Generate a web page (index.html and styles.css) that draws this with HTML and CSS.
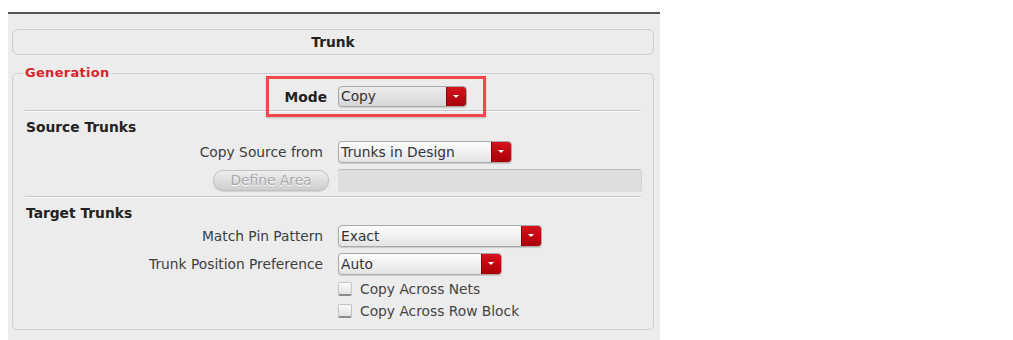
FILE: index.html
```html
<!DOCTYPE html>
<html lang="en">
<head>
    <meta charset="UTF-8">
    <title>Trunk</title>
    <link rel="stylesheet" href="styles.css">
</head>
<body>
    <div class="panel">
        <div class="title-bar">Trunk</div>
        <fieldset class="group">
            <legend>Generation</legend>
            <div class="row mode-row">
                <span class="label bold">Mode</span>
                <div class="select mode-select"><span class="val">Copy</span><span class="btn"></span></div>
            </div>
            <div class="highlight"></div>
            <div class="sep"></div>
            <div class="heading">Source Trunks</div>
            <div class="row src-row">
                <span class="label">Copy Source from</span>
                <div class="select w174"><span class="val">Trunks in Design</span><span class="btn"></span></div>
            </div>
            <div class="row area-row">
                <span class="label"><span class="pill">Define Area</span></span>
                <div class="textfield"></div>
            </div>
            <div class="sep sep2"></div>
            <div class="heading">Target Trunks</div>
            <div class="row pin-row">
                <span class="label">Match Pin Pattern</span>
                <div class="select w204"><span class="val">Exact</span><span class="btn"></span></div>
            </div>
            <div class="row pos-row">
                <span class="label">Trunk Position Preference</span>
                <div class="select w164"><span class="val">Auto</span><span class="btn"></span></div>
            </div>
            <div class="row check-row first">
                <span class="label"></span>
                <label class="check"><span class="box"></span>Copy Across Nets</label>
            </div>
            <div class="row check-row">
                <span class="label"></span>
                <label class="check"><span class="box"></span>Copy Across Row Block</label>
            </div>
        </fieldset>
    </div>
</body>
</html>
```

FILE: styles.css
```css
*{
    margin: 0;
    padding: 0;
    box-sizing: border-box;
}
body{
    background: #fff;
    font-family: "DejaVu Sans", sans-serif;
    font-size: 13.8px;
    color: #3d3d3d;
}
.panel{
    margin: 12px 0 0 8px;
    width: 652px;
    height: 328px;
    background: #ececec;
    border-top: 2px solid #555;
    padding: 15px 6px 0 4px;
}
.title-bar{
    height: 26px;
    border: 1px solid #cdcdcd;
    border-radius: 6px;
    text-align: center;
    line-height: 24px;
    font-weight: bold;
    color: #222;
}
.group{
    position: relative;
    margin-top: 11px;
    height: 264px;
    border: 1px solid #cfcfcf;
    border-radius: 5px;
    padding: 0;
}
.group legend{
    margin-left: 10px;
    padding: 0 2px;
    font-weight: bold;
    font-size: 13px;
    line-height: 14px;
    color: #d8262d;
    letter-spacing: 0.3px;
}
.row{
    display: flex;
    align-items: center;
}
.label{
    width: 310px;
    text-align: right;
    flex: none;
    margin-right: 15px;
    white-space: nowrap;
}
.bold{
    font-weight: bold;
    color: #222;
}
.mode-row{
    margin-top: 6px;
}
.mode-row .label{
    margin-right: 11px;
    width: 314px;
}
.sep{
    margin: 3px 12px 0 12px;
    height: 2px;
    border-top: 1px solid #c9c9c9;
    border-bottom: 1px solid #fafafa;
}
.sep2{
    margin-top: 4px;
}
.heading{
    margin: 7px 0 0 13px;
    font-weight: bold;
    color: #222;
    line-height: 16px;
}
.select{
    display: flex;
    height: 22px;
    border: 1px solid #a9a9a9;
    border-radius: 4px;
    background: linear-gradient(#fdfdfd, #e4e4e4);
    box-shadow: 0 1px 1px rgba(0,0,0,0.15);
    overflow: hidden;
}
.select .val{
    flex: 1;
    padding-left: 2px;
    line-height: 20px;
    color: #333;
}
.select .btn{
    position: relative;
    width: 20px;
    background: linear-gradient(#d4141c, #a80008);
    border-left: 1px solid #8a0006;
}
.select .btn::after{
    content: "";
    position: absolute;
    left: 6px;
    top: 8px;
    border-left: 3px solid transparent;
    border-right: 3px solid transparent;
    border-top: 3px solid #fff;
}
.mode-select{
    width: 129px;
    height: 21px;
    background: linear-gradient(#ececec, #d6d6d6);
}
.mode-select .val{
    line-height: 19px;
}
.w174{ width: 174px; }
.w204{ width: 204px; }
.w164{ width: 164px; }
.src-row{
    margin-top: 6px;
}
.area-row{
    margin-top: 6px;
}
.area-row .label{
    margin-right: 9px;
    width: 316px;
}
.pill{
    display: inline-block;
    width: 116px;
    height: 21px;
    border-radius: 10px;
    border: 1px solid #c2c2c2;
    background: linear-gradient(#eeeeee, #cdcdcd);
    text-align: center;
    line-height: 19px;
    color: #a8a8a8;
    text-shadow: 0 1px 0 #fff;
    box-shadow: 0 1px 1px rgba(0,0,0,0.12);
    vertical-align: top;
}
.textfield{
    width: 304px;
    height: 23px;
    border-radius: 3px;
    background: #dedede;
    border-top: 1px solid #bcbcbc;
    border-right: 1px solid #d2d2d2;
}
.pin-row{
    margin-top: 4px;
}
.pos-row{
    margin-top: 6px;
}
.check-row.first{
    margin-top: 3px;
}
.check-row{
    height: 22px;
}
.check{
    display: flex;
    align-items: center;
    color: #444;
}
.check .box{
    width: 14px;
    height: 14px;
    margin-right: 8px;
    border: 1px solid #c4c4c4;
    border-bottom: 2px solid #8a8a8a;
    border-radius: 2px;
    background: linear-gradient(#fafafa, #e2e2e2);
}
.highlight{
    position: absolute;
    left: 253px;
    top: -4px;
    width: 220px;
    height: 41px;
    border: 3px solid #f2464c;
    box-shadow: 0 1px 2px rgba(0,0,0,0.2);
}
```
